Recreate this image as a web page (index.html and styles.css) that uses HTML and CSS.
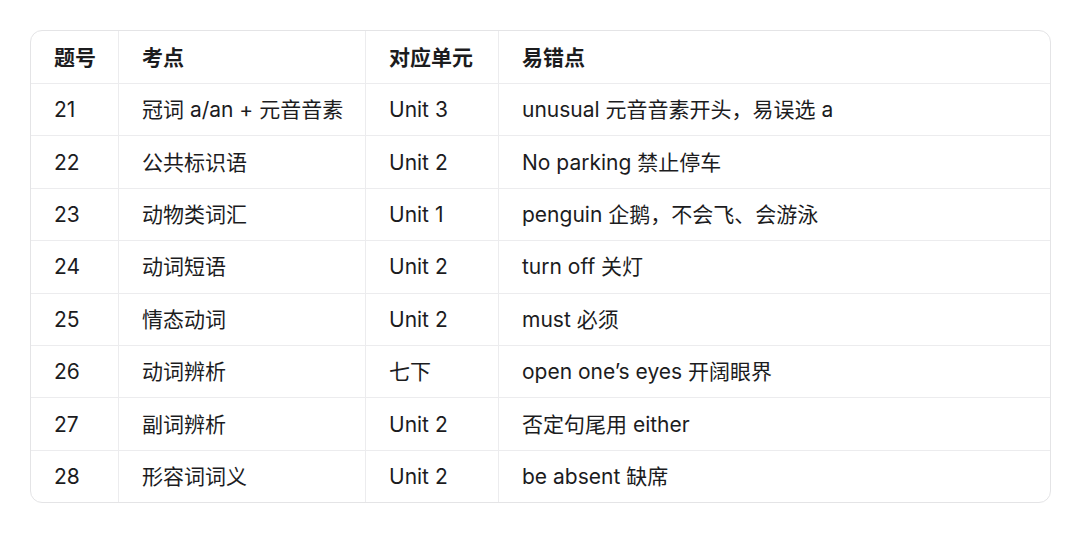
FILE: index.html
```html
<!DOCTYPE html>
<html lang="zh-CN">
<head>
<meta charset="utf-8">
<link rel="stylesheet" href="styles.css">
</head>
<body>
<div class="wrap">
<table class="grid">
  <colgroup>
    <col class="c1"><col class="c2"><col class="c3"><col class="c4">
  </colgroup>
  <thead>
    <tr><th>题号</th><th>考点</th><th>对应单元</th><th>易错点</th></tr>
  </thead>
  <tbody>
    <tr><td>21</td><td>冠词 a/an + 元音音素</td><td>Unit 3</td><td>unusual 元音音素开头，易误选 a</td></tr>
    <tr><td>22</td><td>公共标识语</td><td>Unit 2</td><td>No parking 禁止停车</td></tr>
    <tr><td>23</td><td>动物类词汇</td><td>Unit 1</td><td>penguin 企鹅，不会飞、会游泳</td></tr>
    <tr><td>24</td><td>动词短语</td><td>Unit 2</td><td>turn off 关灯</td></tr>
    <tr><td>25</td><td>情态动词</td><td>Unit 2</td><td>must 必须</td></tr>
    <tr><td>26</td><td>动词辨析</td><td>七下</td><td>open one’s eyes 开阔眼界</td></tr>
    <tr><td>27</td><td>副词辨析</td><td>Unit 2</td><td>否定句尾用 either</td></tr>
    <tr><td>28</td><td>形容词词义</td><td>Unit 2</td><td>be absent 缺席</td></tr>
  </tbody>
</table>
</div>
</body>
</html>
```

FILE: styles.css
```css
html, body {
  margin: 0;
  padding: 0;
  background: #ffffff;
}
body {
  width: 1080px;
  height: 538px;
  overflow: hidden;
  font-family: Inter, "Noto Sans CJK SC", sans-serif;
  color: #1c1c1e;
}
.wrap {
  padding: 30px 0 0 30px;
}
.grid {
  width: 1021px;
  border-collapse: separate;
  border-spacing: 0;
  border: 1px solid #e4e4e6;
  border-radius: 12px;
  overflow: hidden;
  table-layout: fixed;
}
.c1 { width: 88px; }
.c2 { width: 247px; }
.c3 { width: 133px; }
.grid th, .grid td {
  height: 51.4px;
  padding: 0 0 0 23px;
  text-align: left;
  vertical-align: middle;
  font-size: 21px;
  line-height: 1;
  border-right: 1px solid #ececee;
  border-bottom: 1px solid #ececee;
  white-space: nowrap;
}
.grid th {
  font-weight: 600;
  height: 52px;
}
.grid th:last-child, .grid td:last-child {
  border-right: none;
}
.grid tbody tr:last-child td {
  border-bottom: none;
}
```
